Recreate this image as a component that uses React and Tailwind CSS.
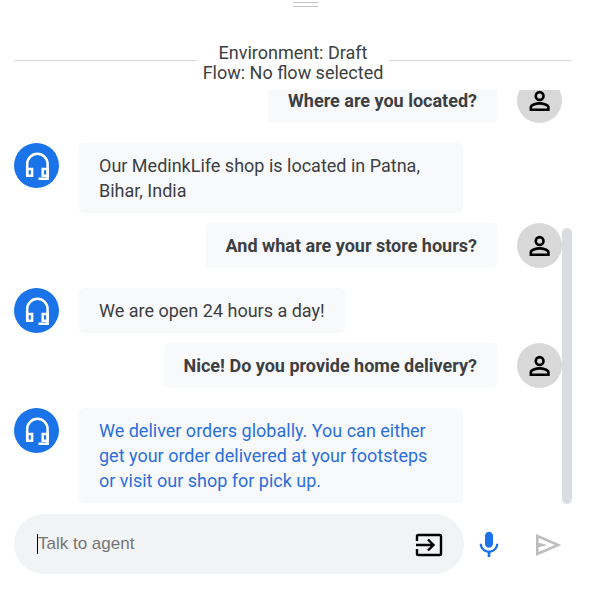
import React from "react";

const messages = [
  { from: "user", text: "Where are you located?" },
  { from: "agent", text: "Our MedinkLife shop is located in Patna, Bihar, India" },
  { from: "user", text: "And what are your store hours?" },
  { from: "agent", text: "We are open 24 hours a day!" },
  { from: "user", text: "Nice! Do you provide home delivery?" },
  {
    from: "agent",
    selected: true,
    text: "We deliver orders globally. You can either get your order delivered at your footsteps or visit our shop for pick up.",
  },
];

function HeadsetIcon() {
  return (
    <svg viewBox="0 0 30 30" className="size-[30px]" fill="none" stroke="white" strokeWidth="2.5" aria-hidden="true">
      <path d="M5.200 25V13a10.200 10.200 0 0 1 20.400 0v14.800H16.500" />
      <path d="M5.200 18h4.900v6.800H5.200z" />
      <path d="M20.700 18h4.900v6.800h-4.900z" />
    </svg>
  );
}

function PersonIcon() {
  return (
    <svg viewBox="0 0 24 24" className="size-[30px]" fill="none" stroke="black" strokeWidth="2.1" aria-hidden="true">
      <circle cx="11.7" cy="8" r="3.1" />
      <path d="M4.700 19v-2c0-1.700 4-3.100 7-3.100s7 1.400 7 3.100v2z" />
    </svg>
  );
}

function Message({ from, text, selected }) {
  if (from === "user") {
    return (
      <li className="mb-5 flex shrink-0 justify-end gap-5">
        <p className="rounded-[5px] bg-[#f8f9fb] px-5 py-2.5 font-bold">{text}</p>
        <span className="flex size-[45px] shrink-0 items-center justify-center rounded-full bg-[#d8d8d8]">
          <PersonIcon />
        </span>
      </li>
    );
  }
  return (
    <li className="mb-2.5 flex shrink-0 gap-5 last:mb-0">
      <span className="flex size-[45px] shrink-0 items-center justify-center rounded-full bg-[#1a73e8]">
        <HeadsetIcon />
      </span>
      <p className={`max-w-[70%] rounded-[5px] bg-[#f8f9fb] px-5 py-2.5 ${selected ? "text-[#2a6fdb]" : ""}`}>
        {text}
      </p>
    </li>
  );
}

export default function App() {
  return (
    <main className="flex h-screen flex-col bg-white pr-5 pb-5 pl-3.5 font-['Roboto',sans-serif] text-[18px] leading-[25px] text-[#3c4043]">
      <div className="mt-0.5 ml-6 h-[5px] w-[25px] shrink-0 self-center border-y border-[#c4c4c4]" />
      <header className="mt-9 flex shrink-0 items-center">
        <div className="mt-[-6px] h-px flex-1 bg-[#dcdcdc]" />
        <div className="px-1.5 text-center leading-5">
          <p>Environment: Draft</p>
          <p>Flow: No flow selected</p>
        </div>
        <div className="mt-[-6px] h-px flex-1 bg-[#dcdcdc]" />
      </header>

      <section className="mt-[7px] flex min-h-0 flex-1">
        <ul className="flex min-w-0 flex-1 flex-col justify-end overflow-hidden pb-px">
          {messages.map((m) => (
            <Message key={m.text} {...m} />
          ))}
        </ul>
        <div className="flex w-2.5 flex-col justify-end">
          <div className="h-2/3 rounded-full bg-[#dadce0]" />
        </div>
      </section>

      <form className="mt-2.5 flex shrink-0 items-center" onSubmit={(e) => e.preventDefault()}>
        <div className="flex h-[60px] min-w-0 flex-1 items-center rounded-full bg-[#f1f3f4] pr-5 pl-[23px]">
          <span className="h-5 w-px bg-black" />
          <input
            type="text"
            aria-label="Talk to agent"
            placeholder="Talk to agent"
            className="min-w-0 flex-1 bg-transparent pb-0.5 font-['Liberation_Sans',sans-serif] text-[17px] outline-none placeholder:text-[#757575]"
          />
          <button type="button" aria-label="Send event" className="mt-0.5 shrink-0">
            <svg viewBox="0 0 30 30" className="size-[30px]" fill="none" stroke="black" strokeWidth="2.4">
              <path d="M3 11V6.300q0-1.300 1.300-1.300h21.400q1.300 0 1.300 1.300v17.400q0 1.300-1.300 1.300H4.300Q3 25 3 23.700V19" />
              <path d="M2 15h17.500M14 9.500l5.500 5.500-5.500 5.500" />
            </svg>
          </button>
        </div>
        <button type="button" aria-label="Speak" className="mt-0.5 ml-[9px] shrink-0">
          <svg viewBox="0 0 24 24" className="size-8" fill="#1a73e8">
            <path d="M12 14c1.660 0 2.990-1.340 2.990-3L15 5c0-1.660-1.340-3-3-3S9 3.340 9 5v6c0 1.660 1.340 3 3 3zm5.300-3c0 3-2.540 5.100-5.300 5.100S6.700 14 6.700 11H5c0 3.410 2.720 6.230 6 6.720V21h2v-3.280c3.280-.48 6-3.300 6-6.720h-1.700z" />
          </svg>
        </button>
        <button type="submit" aria-label="Send" className="mt-0.5 mr-2 ml-[27px] shrink-0">
          <svg viewBox="0 0 24 24" className="size-8" fill="#bdbdbd">
            <path d="M3 20.200V3.800l19 8.200ZM4.900 17.300 17.200 12 4.900 6.700v3.600l6.600 1.700-6.600 1.700Z" />
          </svg>
        </button>
      </form>
    </main>
  );
}
